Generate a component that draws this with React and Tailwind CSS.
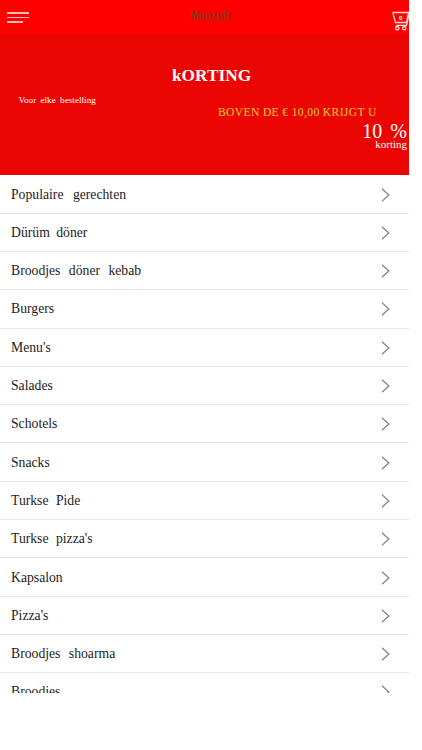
const categories = [
  { name: "Populaire gerechten", spacing: "[word-spacing:6px]" },
  { name: "Dürüm döner", spacing: "[word-spacing:3px]" },
  { name: "Broodjes döner kebab", spacing: "[word-spacing:5px]" },
  { name: "Burgers" },
  { name: "Menu's" },
  { name: "Salades" },
  { name: "Schotels" },
  { name: "Snacks" },
  { name: "Turkse Pide", spacing: "[word-spacing:4px]" },
  { name: "Turkse pizza's", spacing: "[word-spacing:4px]" },
  { name: "Kapsalon" },
  { name: "Pizza's" },
  { name: "Broodjes shoarma", spacing: "[word-spacing:5px]" },
  { name: "Broodjes" },
];

const CartIcon = () => (
  <svg
    width="18"
    height="20"
    viewBox="0 0 18 20"
    fill="none"
    stroke="#ffd9d9"
    strokeWidth="1.3"
    className="shrink-0"
  >
    <path d="M0.5 1.5H16.5L14.5 11.5H3.5L0.8 1.8" />
    <path d="M17.5 1.5L14.5 14.3H4.2" />
    <circle cx="5.2" cy="17.2" r="1.7" />
    <circle cx="12.2" cy="17.2" r="1.7" />
  </svg>
);

const Header = () => (
  <header className="flex h-[35px] items-start bg-[#ff0000] pl-[7px]">
    <button className="mt-[12px] flex w-[22px] flex-col gap-[3px]" aria-label="Menu">
      <span className="h-[1.5px] w-[22px] bg-[#ffbcbc]" />
      <span className="h-[1.5px] w-[22px] bg-[#ffbcbc]" />
      <span className="h-[1.5px] w-[16px] bg-[#ffbcbc]" />
    </button>
    <div className="mt-[10px] ml-[162px] w-[40px] font-['Liberation_Sans',sans-serif] text-[10px] leading-[11px] font-bold tracking-[0.15px] whitespace-nowrap text-[#8f3218]">
      MunzuR
      <div className="h-px w-[38px] bg-[#d01408]" />
    </div>
    <button className="relative mt-[11px] ml-auto w-[17px] overflow-hidden" aria-label="Winkelwagen">
      <CartIcon />
      <span className="absolute top-[4px] left-[7px] font-['Liberation_Sans',sans-serif] text-[6px] leading-[7px] font-bold text-white">
        0
      </span>
    </button>
  </header>
);

const Banner = () => (
  <section className="flex h-[140px] flex-col bg-[#eb0500] text-white">
    <h1 className="mt-[31px] pl-[172px] text-[17.3px] leading-[20px] font-bold whitespace-nowrap">
      kORTING
    </h1>
    <p className="mt-[9px] pl-[18.5px] text-[9.2px] leading-[10px] [word-spacing:2px]">
      Voor elke bestelling
    </p>
    <p className="mt-[1px] pl-[218px] text-[11.5px] leading-[12px] tracking-[0.4px] whitespace-nowrap text-[#ffd21a]">
      BOVEN DE € 10,00 KRIJGT U
    </p>
    <p className="mt-[5px] pr-[2px] text-right text-[20px] leading-[16px] [word-spacing:3px]">
      10 %
    </p>
    <p className="mt-[-1px] pr-[2px] text-right text-[11px] leading-[12px]">
      korting
    </p>
  </section>
);

const Chevron = () => (
  <svg
    width="9"
    height="14"
    viewBox="0 0 9 14"
    fill="none"
    stroke="#858585"
    strokeWidth="1.3"
    className="shrink-0"
  >
    <path d="M1 0.8L7.8 7L1 13.2" />
  </svg>
);

const App = () => {
  return (
    <div className="h-[750px] overflow-hidden bg-white font-['Liberation_Serif',serif]">
      <div className="w-[409px]">
        <Header />
        <Banner />
        <ul className="h-[518px] overflow-hidden pt-[0.4px]">
          {categories.map((category, index) => (
            <li
              key={index}
              className="flex h-[38.3px] items-center justify-between border-b border-[#e8e8e8] pt-[1px] pr-[19px] pl-[11px]"
            >
              <span
                className={`text-[13.7px] leading-[18px] text-[#1c1c1c] ${category.spacing || ""}`}
              >
                {category.name}
              </span>
              <Chevron />
            </li>
          ))}
        </ul>
      </div>
    </div>
  );
};

export default App;
